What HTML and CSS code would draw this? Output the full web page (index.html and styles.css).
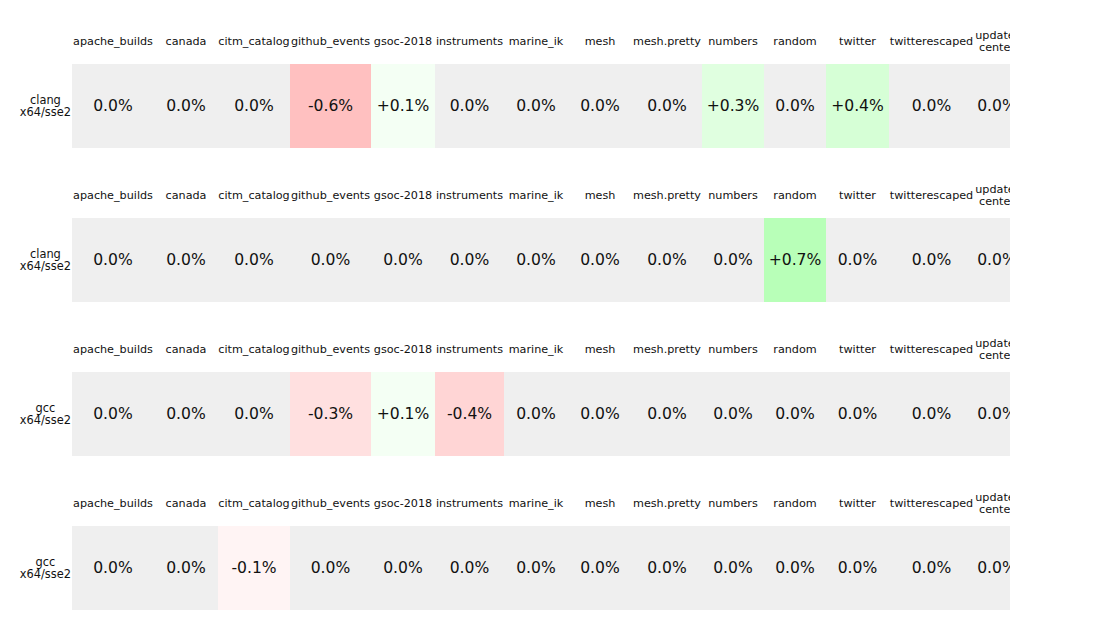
FILE: index.html
```html
<!DOCTYPE html>
<html>
<head>
<meta charset="utf-8">
<link rel="stylesheet" href="styles.css">
</head>
<body>
<div class="page">
  <div class="bench">
    <div class="corner"></div>
    <div class="h">apache_builds</div><div class="h">canada</div><div class="h">citm_catalog</div><div class="h">github_events</div><div class="h">gsoc-2018</div><div class="h">instruments</div><div class="h">marine_ik</div><div class="h">mesh</div><div class="h">mesh.pretty</div><div class="h">numbers</div><div class="h">random</div><div class="h">twitter</div><div class="h">twitterescaped</div><div class="h">update-center</div>
    <div class="label"><span>clang<br>x64/sse2</span></div>
    <div class="v">0.0%</div><div class="v">0.0%</div><div class="v">0.0%</div><div class="v m6">-0.6%</div><div class="v p1">+0.1%</div><div class="v">0.0%</div><div class="v">0.0%</div><div class="v">0.0%</div><div class="v">0.0%</div><div class="v p3">+0.3%</div><div class="v">0.0%</div><div class="v p4">+0.4%</div><div class="v">0.0%</div><div class="v">0.0%</div>
  </div>
  <div class="bench">
    <div class="corner"></div>
    <div class="h">apache_builds</div><div class="h">canada</div><div class="h">citm_catalog</div><div class="h">github_events</div><div class="h">gsoc-2018</div><div class="h">instruments</div><div class="h">marine_ik</div><div class="h">mesh</div><div class="h">mesh.pretty</div><div class="h">numbers</div><div class="h">random</div><div class="h">twitter</div><div class="h">twitterescaped</div><div class="h">update-center</div>
    <div class="label"><span>clang<br>x64/sse2</span></div>
    <div class="v">0.0%</div><div class="v">0.0%</div><div class="v">0.0%</div><div class="v">0.0%</div><div class="v">0.0%</div><div class="v">0.0%</div><div class="v">0.0%</div><div class="v">0.0%</div><div class="v">0.0%</div><div class="v">0.0%</div><div class="v p7">+0.7%</div><div class="v">0.0%</div><div class="v">0.0%</div><div class="v">0.0%</div>
  </div>
  <div class="bench">
    <div class="corner"></div>
    <div class="h">apache_builds</div><div class="h">canada</div><div class="h">citm_catalog</div><div class="h">github_events</div><div class="h">gsoc-2018</div><div class="h">instruments</div><div class="h">marine_ik</div><div class="h">mesh</div><div class="h">mesh.pretty</div><div class="h">numbers</div><div class="h">random</div><div class="h">twitter</div><div class="h">twitterescaped</div><div class="h">update-center</div>
    <div class="label"><span>gcc<br>x64/sse2</span></div>
    <div class="v">0.0%</div><div class="v">0.0%</div><div class="v">0.0%</div><div class="v m3">-0.3%</div><div class="v p1">+0.1%</div><div class="v m4">-0.4%</div><div class="v">0.0%</div><div class="v">0.0%</div><div class="v">0.0%</div><div class="v">0.0%</div><div class="v">0.0%</div><div class="v">0.0%</div><div class="v">0.0%</div><div class="v">0.0%</div>
  </div>
  <div class="bench">
    <div class="corner"></div>
    <div class="h">apache_builds</div><div class="h">canada</div><div class="h">citm_catalog</div><div class="h">github_events</div><div class="h">gsoc-2018</div><div class="h">instruments</div><div class="h">marine_ik</div><div class="h">mesh</div><div class="h">mesh.pretty</div><div class="h">numbers</div><div class="h">random</div><div class="h">twitter</div><div class="h">twitterescaped</div><div class="h">update-center</div>
    <div class="label"><span>gcc<br>x64/sse2</span></div>
    <div class="v">0.0%</div><div class="v">0.0%</div><div class="v m1">-0.1%</div><div class="v">0.0%</div><div class="v">0.0%</div><div class="v">0.0%</div><div class="v">0.0%</div><div class="v">0.0%</div><div class="v">0.0%</div><div class="v">0.0%</div><div class="v">0.0%</div><div class="v">0.0%</div><div class="v">0.0%</div><div class="v">0.0%</div>
  </div>
</div>
</body>
</html>
```
FILE: styles.css
```css
html, body {
  margin: 0;
  padding: 0;
  background: #ffffff;
}

body {
  font-family: "DejaVu Sans", sans-serif;
  color: #111111;
}

.page {
  width: 1010px;
  overflow: hidden;
  display: flex;
  flex-direction: column;
  gap: 24px;
  padding-top: 18px;
}

.bench {
  display: grid;
  grid-template-columns: 72px 82px 64px 72px 81px 64px 69px 64px 64px 70px 62px 62px 63px 85px 46px;
  grid-template-rows: 46px 84px;
  width: max-content;
}

.h {
  font-size: 11.2px;
  line-height: 12px;
  display: flex;
  align-items: center;
  justify-content: center;
  text-align: center;
  padding: 2px 0 0;
}

.label {
  font-size: 11.4px;
  line-height: 12px;
  display: flex;
  align-items: center;
  justify-content: flex-end;
  text-align: center;
  padding-right: 1px;
}

.v {
  font-size: 15.6px;
  background: #efefef;
  display: flex;
  align-items: center;
  justify-content: center;
  white-space: nowrap;
}

.m6 { background: #ffc0c0; }
.m4 { background: #ffd5d5; }
.m3 { background: #ffe0e0; }
.m1 { background: #fff4f4; }
.p1 { background: #f4fff4; }
.p3 { background: #e0ffe0; }
.p4 { background: #d6ffd6; }
.p7 { background: #b8ffb8; }
```
